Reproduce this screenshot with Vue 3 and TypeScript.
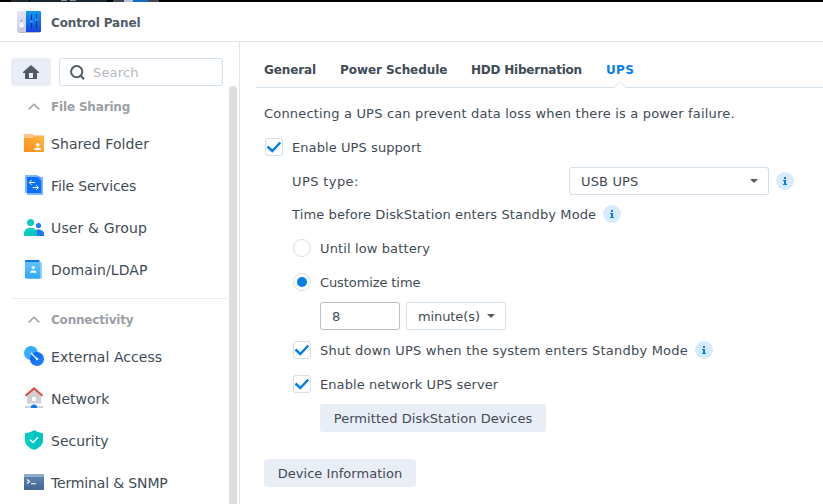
<script setup lang="ts">
import { ref } from 'vue'

interface NavItem { id: string; label: string; tracking: number }
interface NavSection { title: string; tracking: number; items: NavItem[] }

const sections: NavSection[] = [
  {
    title: 'File Sharing',
    tracking: -0.17,
    items: [
      { id: 'folder', label: 'Shared Folder', tracking: 0.08 },
      { id: 'files', label: 'File Services', tracking: -0.13 },
      { id: 'users', label: 'User & Group', tracking: 0.15 },
      { id: 'domain', label: 'Domain/LDAP', tracking: 0.1 }
    ]
  },
  {
    title: 'Connectivity',
    tracking: -0.2,
    items: [
      { id: 'external', label: 'External Access', tracking: 0.04 },
      { id: 'network', label: 'Network', tracking: 0 },
      { id: 'security', label: 'Security', tracking: 0 },
      { id: 'terminal', label: 'Terminal & SNMP', tracking: -0.15 }
    ]
  }
]

const tabs = [
  { label: 'General', width: 52, tracking: -0.1 },
  { label: 'Power Schedule', width: 107, tracking: -0.06 },
  { label: 'HDD Hibernation', width: 111, tracking: -0.22 },
  { label: 'UPS', width: 28, tracking: 0.3 }
]
const activeTab = ref('UPS')
const minutes = ref('8')
const standby = ref<'low' | 'custom'>('custom')

const px = (n: number) => ({ letterSpacing: `${n}px` })
</script>

<template>
  <div class="window">
    <div class="taskbar">
      <i class="task first"></i><i class="task wide"><b></b><b></b></i><i class="task app"><b></b><b></b></i>
    </div>
    <header class="titlebar">
      <svg class="logo" width="24" height="23" viewBox="0 0 24 23">
        <defs>
          <linearGradient id="lg-w" x1="0" y1="0" x2="0" y2="1"><stop offset="0" stop-color="#e2e5fa" /><stop offset="1" stop-color="#c9cae0" /></linearGradient>
          <linearGradient id="lg-b" x1="0" y1="0" x2="0" y2="1"><stop offset="0" stop-color="#0d9bf0" /><stop offset="1" stop-color="#1744e0" /></linearGradient>
        </defs>
        <rect x="1" y="2" width="22" height="20" rx="1.5" fill="#9a9bab" opacity=".65" />
        <path d="M1 0h8v21H1a1 1 0 0 1-1-1V1a1 1 0 0 1 1-1z" fill="url(#lg-w)" />
        <path d="M9 0h14a1 1 0 0 1 1 1v19a1 1 0 0 1-1 1H9z" fill="url(#lg-b)" />
        <circle cx="4.5" cy="15" r="3" fill="#b7b8cb" /><circle cx="4.5" cy="14.2" r="2.7" fill="#f2f3fc" />
        <circle cx="4.5" cy="9.5" r=".6" fill="#555a70" />
        <path d="M14.5 3v14M19.5 3v14" stroke="#0b3585" stroke-width="1" />
        <circle cx="14.5" cy="10.5" r="1.6" fill="#2696fa" /><circle cx="19.5" cy="8.5" r="1.6" fill="#2c8cf4" />
      </svg>
      <span class="title">Control Panel</span>
    </header>

    <div class="body">
      <aside class="sidebar">
        <div class="tools">
          <button class="home" aria-label="Home">
            <svg width="16" height="14" viewBox="0 0 16 14"><path d="M8 0l8 7v1h-2v6H2V8H0V7z" fill="#505b66" /><path d="M6 8h4v5H6z" fill="#e9edf5" /></svg>
          </button>
          <label class="search">
            <svg width="15" height="15" viewBox="0 0 15 15" fill="none" stroke="#505b66" stroke-width="2"><circle cx="6.7" cy="6.7" r="5.6" /><path d="M10 10l4 4.2" stroke-width="2.2" /></svg>
            <span>Search</span>
          </label>
        </div>
        <div class="scroll">
          <nav class="nav">
            <section v-for="s in sections" :key="s.title" class="group">
              <h2 class="group-title">
                <svg width="12" height="7" viewBox="0 0 12 7" fill="none" stroke="#9ba0a6" stroke-width="1.5"><path d="M.7 6.4L6 1.2l5.3 5.2" /></svg>
                <span :style="px(s.tracking)">{{ s.title }}</span>
              </h2>
              <a v-for="it in s.items" :key="it.id" class="item">
                <svg v-if="it.id === 'folder'" width="20" height="20" viewBox="0 0 20 20">
                  <defs><linearGradient id="fo" x1="0" y1="1" x2="1" y2="0"><stop offset="0" stop-color="#fb8c1c" /><stop offset="1" stop-color="#ffb83e" /></linearGradient></defs>
                  <path d="M0 .8A.8.8 0 0 1 .8 0h7.700l1.500 1.200h9.200a.8.8 0 0 1 .8.8V6H0z" fill="#fdc48b" />
                  <path d="M0 4h8.500L10 2.600h10v14.900a.5.5 0 0 1-.5.5H.5a.5.5 0 0 1-.5-.5z" fill="url(#fo)" />
                  <circle cx="13.700" cy="10.700" r="1.800" fill="#fff" /><path d="M10.200 16c0-3.200 7-3.200 7 0z" fill="#fff" />
                </svg>
                <svg v-else-if="it.id === 'files'" width="20" height="20" viewBox="0 1 20 20">
                  <path d="M1 0h12l2.500 2H19v18H3v-2H1z" fill="#69a8fb" opacity=".85" />
                  <path d="M3 2h10.500l3.800 3.700V18H3z" fill="#0870fa" /><path d="M13 1.500h3l1.300 4.200z" fill="#4d96fb" />
                  <path d="M7.500 5.200L5.300 7.500l2.200 2.300M5.500 7.500H11M12.200 10.300l2.200 2.300-2.200 2.200M14 12.600H8.600" fill="none" stroke="#fff" />
                </svg>
                <svg v-else-if="it.id === 'users'" width="20" height="20" viewBox="0 0 20 20">
                  <defs><linearGradient id="us" x1="0" y1="0" x2="1" y2="1"><stop offset="0" stop-color="#12d4c4" /><stop offset="1" stop-color="#00bfbf" /></linearGradient></defs>
                  <circle cx="14.500" cy="7.600" r="2.600" fill="#1f7dfc" /><path d="M9 18v-2c0-6 11-6 11 0v2z" fill="#1b76fb" />
                  <circle cx="6.500" cy="4.500" r="3.500" fill="url(#us)" /><path d="M0 18v-2.700c0-7.500 13-7.500 13 0V18z" fill="url(#us)" />
                </svg>
                <svg v-else-if="it.id === 'domain'" width="20" height="20" viewBox="0 0 20 20">
                  <defs><linearGradient id="dm" x1="0" y1="0" x2="0" y2="1"><stop offset="0" stop-color="#62c3ff" /><stop offset="1" stop-color="#2fa8fa" /></linearGradient></defs>
                  <rect x="3" y="2" width="15" height="17" rx=".8" fill="#9bd4fc" /><path d="M2 0h13.500V4H1V1a1 1 0 0 1 1-1z" fill="#1270f8" />
                  <rect x="1" y="2" width="15.300" height="16.400" rx=".8" fill="url(#dm)" />
                  <circle cx="9.300" cy="7.600" r="1.700" fill="#fff" /><path d="M6 12.800c0-3.100 6.600-3.100 6.600 0z" fill="#fff" />
                </svg>
                <svg v-else-if="it.id === 'external'" width="20" height="20" viewBox="0 1 20 20">
                  <defs><linearGradient id="ex" x1="0" y1="0" x2="1" y2="1"><stop offset="0" stop-color="#0060f5" /><stop offset="1" stop-color="#2a86ff" /></linearGradient></defs>
                  <circle cx="7" cy="7" r="7" fill="#38acfb" /><circle cx="13" cy="13" r="7" fill="url(#ex)" />
                  <path d="M7 7l6 6" stroke="#fff" stroke-width="1.100" /><circle cx="13" cy="13" r="1.300" fill="#fff" />
                </svg>
                <svg v-else-if="it.id === 'network'" width="20" height="22" viewBox="0 0 20 22">
                  <path d="M10 1l7 6.500v8H3v-8z" fill="#cfd1d5" /><path d="M1.500 7.700L10 .4l8.500 7.300" fill="none" stroke="#d84c4c" stroke-width="2" />
                  <rect x="8" y="9" width="4" height="4" fill="#fff" /><path d="M1 18h18v2H1z" fill="#cfd1d5" /><path d="M8.500 16.500h3v1H13V20H7v-2.500h1.500z" fill="#0d74f8" />
                </svg>
                <svg v-else-if="it.id === 'security'" width="20" height="20" viewBox="0 1 20 20">
                  <path d="M10 0c2.800 2 5.500 2.900 9 3.200V10c0 5-4.500 8.200-9 10-4.500-1.800-9-5-9-10V3.200C4.500 2.900 7.200 2 10 0z" fill="#06cbc4" />
                  <path d="M10 0c2.800 2 5.500 2.900 9 3.200V10c0 5-4.500 8.200-9 10z" fill="#00c2c2" opacity=".6" />
                  <path d="M6 9.600l3 2.900 5-5.200" fill="none" stroke="#fff" stroke-width="1.300" />
                </svg>
                <svg v-else width="20" height="20" viewBox="0 1 20 20">
                  <defs><linearGradient id="te" x1="0" y1="0" x2="0" y2="1"><stop offset="0" stop-color="#6389b3" /><stop offset="1" stop-color="#426693" /></linearGradient></defs>
                  <rect y="2" width="20" height="16" rx=".7" fill="url(#te)" /><path d="M.7 2h18.600a.7.7 0 0 1 .7.7V5H0V2.700A.7.7 0 0 1 .7 2z" fill="#8eabc8" />
                  <path d="M3 7.500l2.500 2L3 11.500M7 11.700h5" fill="none" stroke="#fff" stroke-width="1.100" />
                </svg>
                <span :style="px(it.tracking)">{{ it.label }}</span>
              </a>
            </section>
          </nav>
          <div class="thumb"></div>
        </div>
      </aside>

      <main class="content">
        <div class="tabs">
          <a v-for="t in tabs" :key="t.label" class="tab" :class="{ active: t.label === activeTab }" :style="{ width: `${t.width}px` }" @click="activeTab = t.label">
            <span :style="px(t.tracking)">{{ t.label }}</span>
            <svg v-if="t.label === activeTab" class="notch" width="14" height="7" viewBox="0 0 14 7"><path d="M1 7l6-6 6 6z" fill="#fff" /><path d="M.5 6.500H1L7 .7l6 5.800h.500" fill="none" stroke="#d5e0ea" /></svg>
          </a>
        </div>

        <div class="form">
          <p class="line intro">Connecting a UPS can prevent data loss when there is a power failure.</p>
          <div class="line first">
            <span class="check"><svg width="16" height="16" viewBox="0 0 16 16"><path d="M1.500 7.500l4.800 4.500L14.300 3.500" /></svg></span>
            <span class="text t1">Enable UPS support</span>
          </div>
          <div class="line in1">
            <span class="text type">UPS type:</span>
            <div class="select wide"><span class="text t15">USB UPS</span><i class="caret"></i></div>
            <span class="info"><svg width="6" height="10" viewBox="0 0 6 10"><path d="M2 1h2v2H2zM1 4h3v4h1v1H1V8h1V5H1z" /></svg></span>
          </div>
          <div class="line in1 time">
            <span class="text t12">Time before DiskStation enters Standby Mode</span>
            <span class="info"><svg width="6" height="10" viewBox="0 0 6 10"><path d="M2 1h2v2H2zM1 4h3v4h1v1H1V8h1V5H1z" /></svg></span>
          </div>
          <div class="line in1" @click="standby = 'low'">
            <span class="radio" :class="{ on: standby === 'low' }"></span><span class="text t12">Until low battery</span>
          </div>
          <div class="line in1" @click="standby = 'custom'">
            <span class="radio" :class="{ on: standby === 'custom' }"></span><span class="text tn">Customize time</span>
          </div>
          <div class="line in2">
            <input v-model="minutes" class="number" type="text" />
            <div class="select unit"><span class="text">minute(s)</span><i class="caret"></i></div>
          </div>
          <div class="line in1">
            <span class="check"><svg width="16" height="16" viewBox="0 0 16 16"><path d="M1.500 7.500l4.800 4.500L14.300 3.500" /></svg></span>
            <span class="text t2">Shut down UPS when the system enters Standby Mode</span>
            <span class="info"><svg width="6" height="10" viewBox="0 0 6 10"><path d="M2 1h2v2H2zM1 4h3v4h1v1H1V8h1V5H1z" /></svg></span>
          </div>
          <div class="line in1">
            <span class="check"><svg width="16" height="16" viewBox="0 0 16 16"><path d="M1.500 7.500l4.800 4.500L14.300 3.500" /></svg></span>
            <span class="text t1">Enable network UPS server</span>
          </div>
          <div class="line in2"><button class="btn permitted">Permitted DiskStation Devices</button></div>
          <button class="btn device">Device Information</button>
        </div>
      </main>
    </div>
  </div>
</template>

<style>
body { background: #fff; overflow: hidden; }
</style>

<style scoped>
* { box-sizing: border-box; }
.window { width: 823px; height: 504px; display: flex; flex-direction: column; overflow: hidden; background: #fff; color: #414b55; font: 13px/20px "DejaVu Sans", sans-serif; white-space: nowrap; }
.taskbar { height: 2px; flex: none; background: #000; display: flex; padding-left: 11px; }
.task { display: flex; height: 2px; background: #1d272f; }
.first { width: 18px; margin-right: 1px; }
.wide.task { width: 77px; padding-left: 31px; gap: 3px; margin-right: 6px; }
.task b { width: 6px; height: 1px; background: #8b9298; }
.app { width: 46px; padding-left: 11px; background: #41474c; }
.task.app b { height: 2px; background: #b9bfdb; width: 9px; }
.task.app b + b { background: #1769c8; width: 15px; }
.titlebar { height: 40px; flex: none; border-bottom: 1px solid #dfe7ef; display: flex; align-items: center; padding: 0 0 0 17px; gap: 10px; }
.title { font-weight: 700; font-size: 12px; color: #505b66; letter-spacing: -.13px; padding-top: 2px; }
.logo { margin-top: 2px; }
.body { flex: 1; display: flex; min-height: 0; }
.sidebar { width: 240px; flex: none; border-right: 1px solid #dfe7ef; display: flex; flex-direction: column; }
.tools { display: flex; gap: 8px; padding: 16px 0 0 11px; }
.home { width: 40px; height: 28px; border: 0; border-radius: 3px; background: #e9edf5; padding: 0; display: flex; align-items: center; justify-content: center; }
.search { width: 164px; height: 28px; border: 1px solid #d3dfea; border-radius: 3px; display: flex; align-items: center; padding-left: 10px; gap: 8px; color: #b5bac0; letter-spacing: .15px; }
.search span { padding-top: 2px; }
.scroll { flex: 1; min-height: 0; display: flex; overflow: hidden; }
.nav { width: 229px; padding-left: 11px; flex: none; overflow: hidden; }
.thumb { width: 8px; border-radius: 4px 4px 0 0; background: #dedede; }
.group { width: 216px; }
.group + .group { border-top: 1px solid #e8ecf3; margin-top: 7px; }
.group-title { margin: 0; height: 37px; padding: 3px 0 0 17px; display: flex; align-items: center; gap: 11px; font-size: 12px; font-weight: 700; color: #9ba0a6; }
.group-title span { padding-top: 2px; }
.item { height: 42px; padding-left: 13px; display: flex; align-items: center; gap: 7px; font-size: 14px; }
.item svg { overflow: visible; }
.content { flex: 1; padding-left: 16px; min-width: 0; }
.tabs { height: 46px; border-bottom: 1px solid #d5e0ea; padding: 10px 0 0 8px; display: flex; gap: 24px; font-size: 12px; font-weight: 700; }
.tab { position: relative; line-height: 36px; height: 35px; }
.tab.active { color: #057feb; }
.notch { position: absolute; left: 7px; bottom: -1px; }
.form { padding: 8px 0 0 8px; }
.line { height: 34px; margin: 0; display: flex; align-items: center; }
.intro { letter-spacing: .18px; padding-top: 2px; }
.text { padding-top: 2px; }
.first.line { padding-left: 1px; }
.in1 { padding-left: 28px; }
.in1 .check, .in1 .radio { margin-left: 1px; }
.in2 { padding-left: 56px; }
.time { height: 33px; padding-bottom: 1px; }
.check, .radio { width: 18px; height: 18px; flex: none; border: 1px solid #d3e0ec; margin-right: 9px; }
.check { border-radius: 3px; }
.check svg { display: block; fill: none; stroke: #057feb; stroke-width: 2.4; }
.radio { border-radius: 50%; display: flex; align-items: center; justify-content: center; }
.radio.on::after { content: ""; width: 10px; height: 10px; border-radius: 50%; background: #057feb; }
.t1 { letter-spacing: .08px; }
.t12 { letter-spacing: .12px; }
.t15 { letter-spacing: .15px; }
.t2 { letter-spacing: .21px; }
.tn { letter-spacing: -.1px; }
.type { width: 277px; letter-spacing: .4px; }
.select { height: 28px; border: 1px solid #d3dfea; border-radius: 3px; padding: 0 10px 0 11px; display: flex; align-items: center; justify-content: space-between; }
.select.wide { width: 200px; }
.unit { width: 100px; margin-left: 6px; }
.unit .text { width: 62px; overflow: hidden; flex: none; letter-spacing: -.1px; }
.caret { border: solid transparent; border-width: 4px 4px 0; border-top-color: #505b66; }
.info { width: 18px; height: 18px; flex: none; border-radius: 50%; background: #d8eafe; margin-left: 7px; display: flex; align-items: center; justify-content: center; }
.info svg { fill: #057feb; }
.number { width: 80px; height: 28px; border: 1px solid #b9bec8; border-radius: 3px; padding: 1px 11px 0; color: inherit; font: inherit; outline: none; }
.btn { display: block; height: 28px; border: 0; border-radius: 3px; background: #e9edf5; color: inherit; font: inherit; padding: 2px 0 0; text-align: center; }
.permitted { width: 226px; letter-spacing: .06px; }
.device { width: 152px; margin-top: 24px; letter-spacing: .04px; }
</style>
